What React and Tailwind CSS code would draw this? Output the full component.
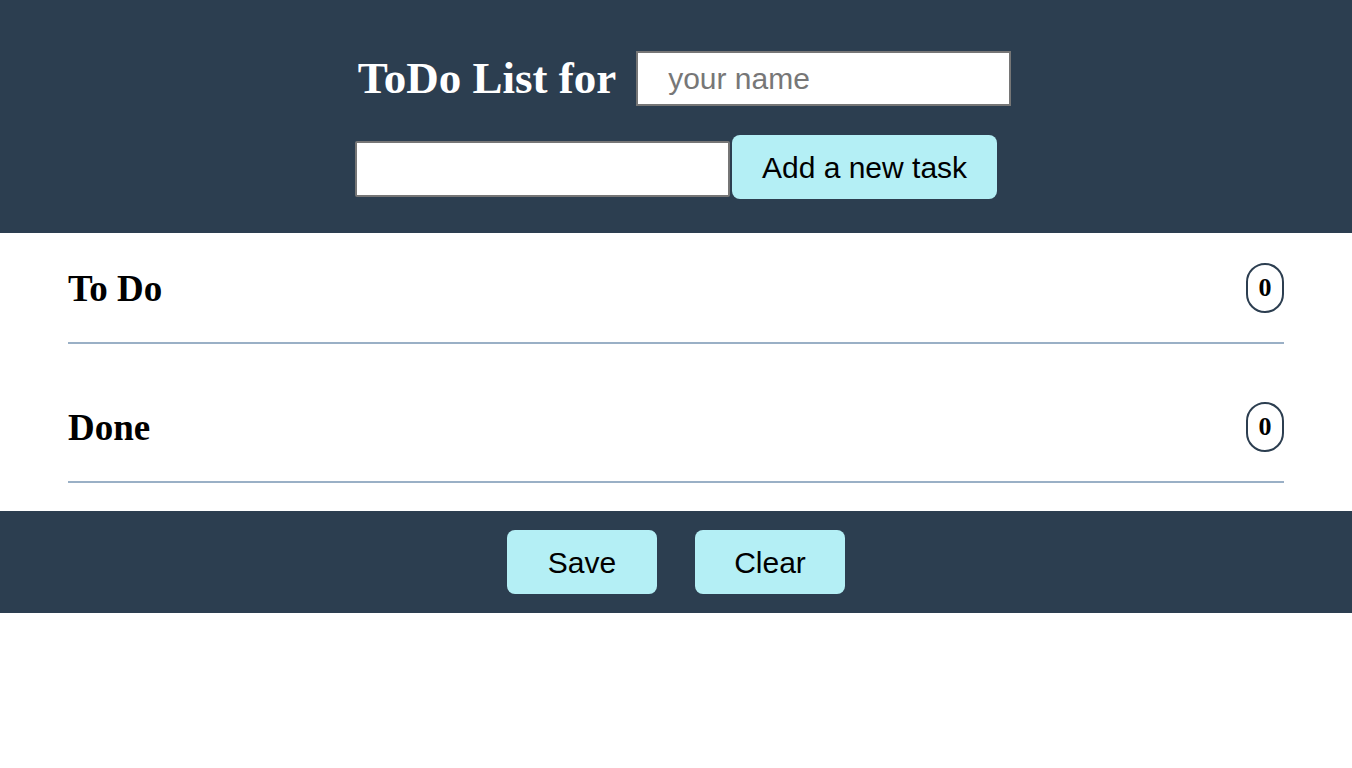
import React, { useState } from "react";

const serif = "font-['Liberation_Serif','Times_New_Roman',serif]";
const sans = "font-['Liberation_Sans',Arial,sans-serif]";

function Section({ title, count }) {
  return (
    <div className="border-b-2 border-[#9ab0c6] pb-[29px]">
      <div className="flex h-[50px] items-center justify-between">
        <h2 className={`${serif} text-[37px] font-bold leading-none text-black`}>{title}</h2>
        <span
          className={`${serif} flex h-[50px] w-[38px] items-center justify-center rounded-[19px] border-2 border-[#2c3e50] text-[26px] font-bold leading-none text-black`}
        >
          {count}
        </span>
      </div>
    </div>
  );
}

export default function App() {
  const [name, setName] = useState("");
  const [task, setTask] = useState("");

  return (
    <div className="min-h-screen bg-white">
      <header className="bg-[#2c3e50] pt-[51px] pb-[34px]">
        <div className="flex items-center justify-center gap-[20px] pl-[17px]">
          <h1 className={`${serif} text-[45px] font-bold leading-none text-white`}>ToDo List for</h1>
          <input
            value={name}
            onChange={(e) => setName(e.target.value)}
            placeholder="your name"
            className={`${sans} h-[55px] w-[375px] border-2 border-[#767676] bg-white pl-[30px] text-[30px] text-black placeholder:text-[#777777] outline-none`}
          />
        </div>
        <div className="mt-[29px] flex items-center justify-center gap-[2px]">
          <input
            value={task}
            onChange={(e) => setTask(e.target.value)}
            className={`${sans} mt-[4px] h-[56px] w-[375px] rounded-[2px] border-2 border-[#767676] bg-white px-2 text-[28px] outline-none`}
          />
          <button
            className={`${sans} h-[64px] w-[265px] rounded-[8px] bg-[#b4eff5] text-[30px] text-black`}
          >
            Add a new task
          </button>
        </div>
      </header>

      <main className="px-[68px] pt-[30px] pb-[28px]">
        <div className="flex flex-col gap-[58px]">
          <Section title="To Do" count={0} />
          <Section title="Done" count={0} />
        </div>
      </main>

      <footer className="flex justify-center gap-[38px] bg-[#2c3e50] py-[19px]">
        <button className={`${sans} h-[64px] w-[150px] rounded-[8px] bg-[#b4eff5] text-[30px] text-black`}>
          Save
        </button>
        <button className={`${sans} h-[64px] w-[150px] rounded-[8px] bg-[#b4eff5] text-[30px] text-black`}>
          Clear
        </button>
      </footer>
    </div>
  );
}
